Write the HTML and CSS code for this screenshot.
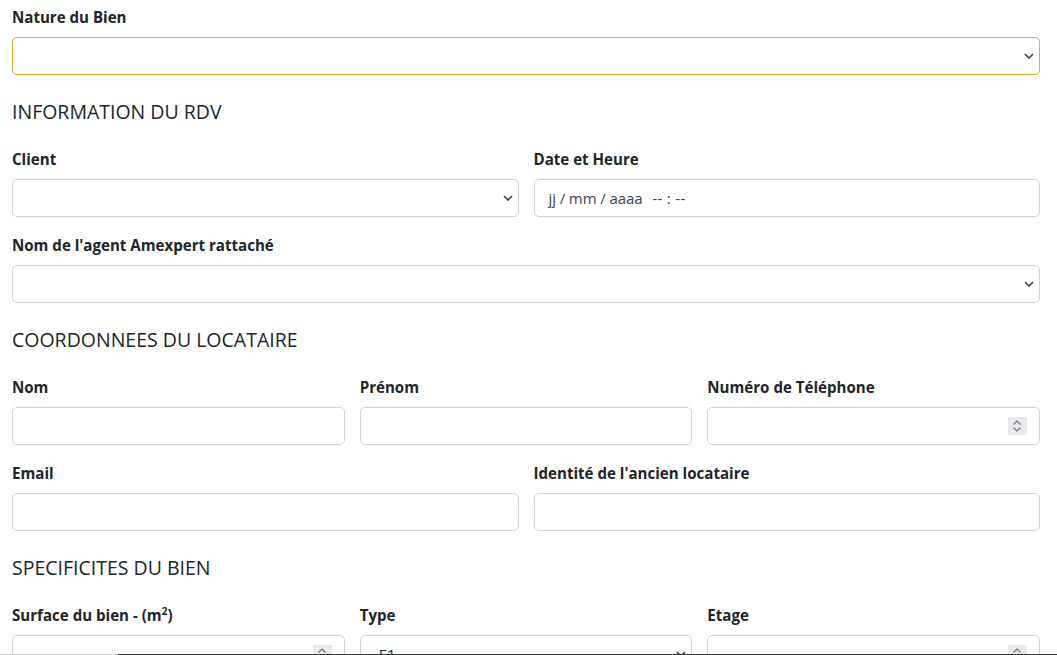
FILE: index.html
```html
<!DOCTYPE html>
<html lang="fr">
<head>
<meta charset="utf-8">
<title>Formulaire RDV</title>
<link rel="stylesheet" href="styles.css">
</head>
<body>
<div class="page">
  <div class="group">
    <div class="label">Nature du Bien</div>
    <div class="field select focus">
      <span class="value"></span>
      <svg class="chev" width="10" height="6" viewBox="0 0 10 6"><path d="M1 1l4 4 4-4" fill="none" stroke="#3c4043" stroke-width="1.6"/></svg>
    </div>
  </div>

  <h5 class="section">INFORMATION DU RDV</h5>
  <div class="row two">
    <div class="group">
      <div class="label">Client</div>
      <div class="field select">
        <span class="value"></span>
        <svg class="chev" width="10" height="6" viewBox="0 0 10 6"><path d="M1 1l4 4 4-4" fill="none" stroke="#3c4043" stroke-width="1.6"/></svg>
      </div>
    </div>
    <div class="group">
      <div class="label">Date et Heure</div>
      <div class="field date"><span>jj / mm / aaaa</span><span class="time">-- : --</span></div>
    </div>
  </div>
  <div class="group">
    <div class="label">Nom de l'agent Amexpert rattaché</div>
    <div class="field select">
      <span class="value"></span>
      <svg class="chev" width="10" height="6" viewBox="0 0 10 6"><path d="M1 1l4 4 4-4" fill="none" stroke="#3c4043" stroke-width="1.6"/></svg>
    </div>
  </div>

  <h5 class="section">COORDONNEES DU LOCATAIRE</h5>
  <div class="row three">
    <div class="group">
      <div class="label">Nom</div>
      <div class="field"></div>
    </div>
    <div class="group">
      <div class="label">Prénom</div>
      <div class="field"></div>
    </div>
    <div class="group">
      <div class="label">Numéro de Téléphone</div>
      <div class="field number">
        <span class="spin"><svg width="10" height="14" viewBox="0 0 10 14"><path d="M1.5 5.5l3.5-3.5 3.5 3.5M1.5 8.5l3.5 3.5 3.5-3.5" fill="none" stroke="#707070" stroke-width="1.1"/></svg></span>
      </div>
    </div>
  </div>
  <div class="row two">
    <div class="group">
      <div class="label">Email</div>
      <div class="field"></div>
    </div>
    <div class="group">
      <div class="label">Identité de l'ancien locataire</div>
      <div class="field"></div>
    </div>
  </div>

  <h5 class="section">SPECIFICITES DU BIEN</h5>
  <div class="row three">
    <div class="group">
      <div class="label">Surface du bien - (m<sup>2</sup>)</div>
      <div class="field number">
        <span class="spin"><svg width="10" height="14" viewBox="0 0 10 14"><path d="M1.5 5.5l3.5-3.5 3.5 3.5M1.5 8.5l3.5 3.5 3.5-3.5" fill="none" stroke="#707070" stroke-width="1.1"/></svg></span>
      </div>
    </div>
    <div class="group">
      <div class="label">Type</div>
      <div class="field select">
        <span class="value type">E1</span>
        <svg class="chev" width="10" height="6" viewBox="0 0 10 6"><path d="M1 1l4 4 4-4" fill="none" stroke="#3c4043" stroke-width="1.6"/></svg>
      </div>
    </div>
    <div class="group">
      <div class="label">Etage</div>
      <div class="field number">
        <span class="spin"><svg width="10" height="14" viewBox="0 0 10 14"><path d="M1.5 5.5l3.5-3.5 3.5 3.5M1.5 8.5l3.5 3.5 3.5-3.5" fill="none" stroke="#707070" stroke-width="1.1"/></svg></span>
      </div>
    </div>
  </div>
</div>
<div class="hscroll"><div class="track"></div><div class="thumb"></div></div>
</body>
</html>
```

FILE: styles.css
```css
html, body {
  margin: 0;
  padding: 0;
  background: #fff;
  overflow: hidden;
  height: 655px;
}
body {
  font-family: "Open Sans", "Liberation Sans", sans-serif;
  color: #212529;
}
.page {
  padding: 5px 17px 0 12px;
}
.group {
  margin-bottom: 16px;
}
.label {
  font-weight: 700;
  font-size: 15.1px;
  line-height: 24px;
  height: 24px;
  margin-bottom: 8px;
  white-space: nowrap;
}
.label sup {
  font-size: 10px;
  line-height: 0;
  vertical-align: 6px;
}
.field {
  box-sizing: border-box;
  height: 38px;
  border: 1px solid #ced4da;
  border-radius: 5px;
  background: #fff;
  display: flex;
  align-items: center;
  padding: 0 12px;
  font-size: 15px;
}
.field.focus {
  border-color: #f0a52a;
}
.select {
  justify-content: space-between;
  padding-right: 5px;
}
.select .value.type {
  padding-left: 6px;
}
.chev {
  display: block;
}
.date {
  padding-left: 14px;
  color: #3d4349;
  font-size: 15px;
  letter-spacing: -0.1px;
}
.date .time {
  margin-left: 10px;
  letter-spacing: 0.3px;
}
.number {
  justify-content: flex-end;
  padding-right: 12px;
}
.spin {
  width: 19px;
  height: 18px;
  background: #e9e9ed;
  display: flex;
  align-items: center;
  justify-content: center;
}
.spin svg {
  display: block;
}
.section {
  margin: 0 0 23px;
  padding-top: 9px;
  font-size: 19.5px;
  font-weight: 400;
  line-height: 24px;
  height: 24px;
  white-space: nowrap;
}
.row {
  display: grid;
  column-gap: 15px;
}
.row.two {
  grid-template-columns: 1fr 1fr;
}
.row.three {
  grid-template-columns: 1fr 1fr 1fr;
}
.hscroll {
  position: fixed;
  left: 0;
  right: 0;
  bottom: 0;
  height: 1px;
  display: flex;
}
.hscroll .track {
  width: 118px;
  background: #c9c9c9;
}
.hscroll .thumb {
  flex: 1;
  background: #3a3a3a;
}
```
